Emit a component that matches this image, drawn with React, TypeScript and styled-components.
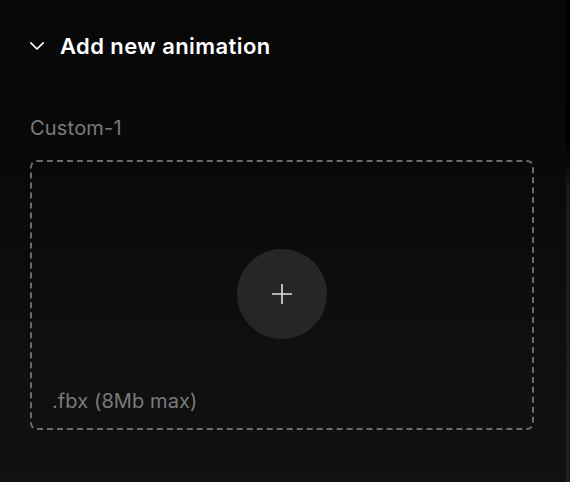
import React from "react";
import styled, { createGlobalStyle } from "styled-components";

const Global = createGlobalStyle`
  html, body { margin: 0; padding: 0; background: #080808; }
  body { font-family: Inter, "Noto Sans", sans-serif; }
  * { box-sizing: border-box; }
`;

const Panel = styled.div`
  width: 570px;
  height: 482px;
  position: relative;
  background: linear-gradient(180deg, #070707 0%, #090909 35%, #0f0f0f 70%, #111111 100%);
  display: flex;
  flex-direction: column;
  padding: 30px 36px 0 30px;
`;

const EdgeStrip = styled.div`
  position: absolute;
  top: 0;
  right: 0;
  width: 4px;
  height: 100%;
  background: linear-gradient(180deg, #000 0%, #000 30%, #1a1a1a 40%, #1f1f1f 100%);
`;

const Header = styled.button`
  display: flex;
  align-items: center;
  gap: 16px;
  background: none;
  border: none;
  padding: 0;
  cursor: pointer;
  height: 32px;
`;

const Title = styled.span`
  font-family: Inter, sans-serif;
  font-weight: 600;
  font-size: 22px;
  letter-spacing: 0.42px;
  color: #ffffff;
`;

const Label = styled.div`
  margin-top: 54px;
  font-size: 20px;
  color: #7a7a7a;
  letter-spacing: 0.2px;
  line-height: 24px;
`;

const Dropzone = styled.div`
  margin-top: 20px;
  height: 270px;
  border: 2px dashed #6b6b6b;
  border-radius: 7px;
  display: flex;
  flex-direction: column;
  padding: 0 20px 15px 20px;
`;

const Center = styled.div`
  flex: 1;
  display: flex;
  align-items: center;
  justify-content: center;
  padding-top: 36px;
`;

const AddCircle = styled.div`
  width: 90px;
  height: 90px;
  border-radius: 50%;
  background: #262626;
  display: flex;
  align-items: center;
  justify-content: center;
`;

const Hint = styled.div`
  font-size: 20px;
  color: #7a7a7a;
  letter-spacing: 0.1px;
  line-height: 24px;
`;

export default function App() {
  return (
    <>
      <Global />
      <Panel>
        <Header>
          <svg width="14" height="14" viewBox="0 0 14 14" fill="none">
            <path d="M0.8 3.8 L7 10 L13.2 3.8" stroke="#fff" strokeWidth="1.7" strokeLinecap="round" strokeLinejoin="round" />
          </svg>
          <Title>Add new animation</Title>
        </Header>
        <Label>Custom-1</Label>
        <Dropzone>
          <Center>
            <AddCircle>
              <svg width="22" height="22" viewBox="0 0 22 22" fill="none">
                <path d="M11 1 V21 M1 11 H21" stroke="#e0e0e0" strokeWidth="1.6" />
              </svg>
            </AddCircle>
          </Center>
          <Hint>.fbx (8Mb max)</Hint>
        </Dropzone>
        <EdgeStrip />
      </Panel>
    </>
  );
}
